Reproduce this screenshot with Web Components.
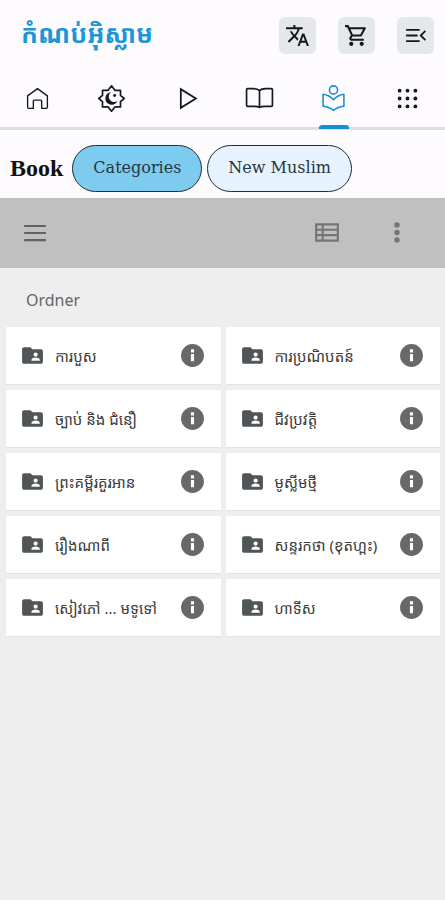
<!DOCTYPE html>
<html lang="km">
<head>
<meta charset="utf-8">
<meta name="viewport" content="width=device-width, initial-scale=1">
<title>កំណប់អ៊ិស្លាម</title>
<style>
  body {
    margin: 0;
    background: #eeeeee;
    font-family: "Noto Sans", "Noto Sans Khmer", sans-serif;
  }
</style>
</head>
<body>
<app-page></app-page>

<script>
const ICONS = {
  translate: '<path fill="currentColor" d="M12.87 15.07l-2.54-2.51.03-.03c1.74-1.94 2.98-4.17 3.71-6.53H17V4h-7V2H8v2H1v1.99h11.17C11.5 7.92 10.44 9.75 9 11.35 8.07 10.32 7.3 9.19 6.69 8h-2c.73 1.63 1.73 3.17 2.98 4.56l-5.09 5.02L4 19l5-5 3.11 3.11.76-2.04zM18.5 10h-2L12 22h2l1.12-3h4.75L21 22h2l-4.5-12zm-2.62 7l1.62-4.33L19.12 17h-3.24z"/>',
  cart: '<path fill="currentColor" d="M15.55 13c.75 0 1.41-.41 1.75-1.03l3.58-6.49A.996.996 0 0 0 20.01 4H5.21l-.94-2H1v2h2l3.6 7.59-1.35 2.44C4.52 15.37 5.48 17 7 17h12v-2H7l1.1-2h7.45zM6.16 6h12.15l-2.76 5H8.53L6.16 6zM7 18c-1.1 0-1.99.9-1.99 2S5.9 22 7 22s2-.9 2-2-.9-2-2-2zm10 0c-1.1 0-1.99.9-1.99 2s.89 2 1.99 2 2-.9 2-2-.9-2-2-2z"/>',
  menuOpen: '<path fill="none" stroke="currentColor" stroke-width="1.7" d="M3 6.5h13M3 12h11M3 17.5h13M21.5 7.5L17 12l4.5 4.5"/>',
  home: '<path fill="none" stroke="currentColor" stroke-width="1.3" stroke-linejoin="round" d="M2.500 9.500L12 2.500l9.500 7V20.500q0 1-1 1h-4.500v-7q0-1-1-1h-6q-1 0-1 1v7H3.500q-1 0-1-1z"/>',
  star: '<path fill="none" stroke="currentColor" stroke-width="1.5" stroke-linejoin="round" d="M12 .7l3 4H20V9.300L23.300 12 20 14.700V19.500H15l-3 3.800-3-3.800H4V14.700L.7 12 4 9.300V4.700H9z"/><path fill="currentColor" d="M11.500 6.500a5.500 5.500 0 1 0 5.600 7.700 4.500 4.500 0 1 1-5.600-7.700z"/><circle cx="14.800" cy="9.300" r="1.300" fill="currentColor"/>',
  play: '<path fill="none" stroke="currentColor" stroke-width="1.7" d="M7.500 3v18L22 12z"/>',
  book: '<path fill="none" stroke="currentColor" stroke-width="1.5" stroke-linejoin="round" d="M12 5C10.500 3.500 9 3.300 6.500 3.300H1.500Q.5 3.300.5 4.300V18Q.5 19 1.500 19h5.500c2.500 0 4 0 5 1 1-1 2.500-1 5-1h5.500q1 0 1-1V4.300q0-1-1-1H17.500C15 3.300 13.500 3.500 12 5zM12 5v15"/>',
  reader: '<circle cx="12" cy="3.800" r="3.900" fill="none" stroke="currentColor" stroke-width="1.5"/><path fill="none" stroke="currentColor" stroke-width="1.5" stroke-linejoin="round" d="M2 8C6 8.500 9.500 10.500 12 13.300c2.500-2.800 6-4.800 10-5.300V19.500c-4 .5-7.500 1.700-10 3.900-2.500-2.200-6-3.400-10-3.900z"/>',
  apps: '<g fill="currentColor"><circle cx="3" cy="3" r="2.200"/><circle cx="12" cy="3" r="2.200"/><circle cx="21" cy="3" r="2.200"/><circle cx="3" cy="12" r="2.200"/><circle cx="12" cy="12" r="2.200"/><circle cx="21" cy="12" r="2.200"/><circle cx="3" cy="21" r="2.200"/><circle cx="12" cy="21" r="2.200"/><circle cx="21" cy="21" r="2.200"/></g>',
  menu: '<path fill="none" stroke="currentColor" stroke-width="2" d="M2 5.5h20M2 12h20M2 18.5h20"/>',
  list: '<path fill="none" stroke="currentColor" stroke-width="2" d="M2 4h20v15H2zM2 9h20M2 14h20M8 4v15"/>',
  more: '<g fill="currentColor"><circle cx="12" cy="4.500" r="2.500"/><circle cx="12" cy="11.500" r="2.500"/><circle cx="12" cy="18.500" r="2.500"/></g>',
  folder: '<path fill="currentColor" d="M20 6h-8l-2-2H4c-1.1 0-1.99.9-1.99 2L2 18c0 1.1.9 2 2 2h16c1.1 0 2-.9 2-2V8c0-1.1-.9-2-2-2zm-5 3c1.1 0 2 .9 2 2s-.9 2-2 2-2-.9-2-2 .9-2 2-2zm4 8h-8v-1c0-1.33 2.67-2 4-2s4 .67 4 2v1z"/>',
  info: '<path fill="currentColor" d="M12 1a11 11 0 1 0 0 22 11 11 0 0 0 0-22zm1.500 16.500h-3v-7h3zm0-8.500h-3V6h3z"/>'
};

class UiIcon extends HTMLElement {
  constructor() {
    super();
    this.attachShadow({ mode: 'open' });
  }

  connectedCallback() {
    this.shadowRoot.innerHTML = `
      <style>
        :host { display: block; flex: none; width: var(--icon-size, 24px); height: var(--icon-size, 24px); }
        svg { display: block; width: 100%; height: 100%; overflow: visible; }
      </style>
      <svg viewBox="0 0 24 24" aria-hidden="true">${ICONS[this.getAttribute('name')]}</svg>
    `;
  }
}

class AppHeader extends HTMLElement {
  constructor() {
    super();
    this.attachShadow({ mode: 'open' });
    this.shadowRoot.innerHTML = `
      <style>
        :host { display: block; background: #fefbff; }
        header { display: flex; align-items: center; height: 70px; padding: 0 11px 0 21px; box-sizing: border-box; }
        h1 { flex: 1; margin: 0 0 4px; color: #1c96d6; font-size: 25px; line-height: 40px; font-weight: 700; white-space: nowrap; }
        .actions { display: flex; gap: 22px; }
        button {
          display: grid; place-items: center; width: 37px; height: 37px; padding: 0;
          border: 0; border-radius: 6px; background: #e5e8eb; color: #15171a; --icon-size: 25px;
        }
      </style>
      <header>
        <h1><slot></slot></h1>
        <div class="actions">
          <button type="button" aria-label="Language"><ui-icon name="translate"></ui-icon></button>
          <button type="button" aria-label="Cart"><ui-icon name="cart"></ui-icon></button>
          <button type="button" aria-label="Menu"><ui-icon name="menuOpen"></ui-icon></button>
        </div>
      </header>
    `;
  }
}

class TabBar extends HTMLElement {
  constructor() {
    super();
    this.attachShadow({ mode: 'open' });
    this.shadowRoot.innerHTML = `
      <style>
        :host { display: block; background: #fefbff; }
        nav { display: grid; grid-template-columns: repeat(6, 1fr); height: 60px; box-sizing: border-box; border-bottom: 3px solid #dddcdf; }
        a { position: relative; display: grid; place-items: center; color: #17181c; --icon-size: 25px; }
        a.big { --icon-size: 27px; }
        a.active { color: #168ed0; }
        a.active::after {
          content: ""; position: absolute; bottom: -2px; left: calc(50% - 15px);
          width: 30px; height: 4px; border-radius: 3px 3px 0 0; background: #168ed0;
        }
        a.small { --icon-size: 21px; }
      </style>
      <nav>
        <a href="#home" aria-label="Home"><ui-icon name="home"></ui-icon></a>
        <a href="#prayer" class="big" aria-label="Prayer"><ui-icon name="star"></ui-icon></a>
        <a href="#videos" aria-label="Videos"><ui-icon name="play"></ui-icon></a>
        <a href="#quran" class="big" aria-label="Quran"><ui-icon name="book"></ui-icon></a>
        <a href="#books" class="active" aria-label="Books" aria-current="page"><ui-icon name="reader"></ui-icon></a>
        <a href="#more" class="small" aria-label="More"><ui-icon name="apps"></ui-icon></a>
      </nav>
    `;
  }
}

class FilterChip extends HTMLElement {
  constructor() {
    super();
    this.attachShadow({ mode: 'open' });
    this.shadowRoot.innerHTML = `
      <style>
        :host { display: block; }
        button {
          display: block; height: 47px; padding: 0 20px; border: 1px solid #202b32; border-radius: 24px;
          background: #e6f2fd; color: #263743; white-space: nowrap;
          font-family: "DejaVu Serif", serif; font-size: 16px; line-height: 24px;
        }
        :host([selected]) button { background: #7ecbf0; }
      </style>
      <button type="button"><slot></slot></button>
    `;
  }
}

class FilterBar extends HTMLElement {
  constructor() {
    super();
    this.attachShadow({ mode: 'open' });
    this.shadowRoot.innerHTML = `
      <style>
        :host {
          display: flex; align-items: center; gap: 5px; height: 68px; box-sizing: border-box;
          padding: 8px 10px 0; background: #fefbff;
        }
        h2 { margin: 0 4px 0 0; color: #111; font-family: "Liberation Serif", serif; font-size: 24px; line-height: 32px; }
      </style>
      <h2>Book</h2>
      <slot></slot>
    `;
  }
}

class ListToolbar extends HTMLElement {
  constructor() {
    super();
    this.attachShadow({ mode: 'open' });
    this.shadowRoot.innerHTML = `
      <style>
        :host { display: flex; align-items: center; gap: 44px; height: 70px; box-sizing: border-box; padding: 0 35px 0 22px; background: #c0c0c0; }
        button { padding: 0; border: 0; background: none; color: #757575; --icon-size: 26px; }
        button.menu { margin-right: auto; color: #626262; }
      </style>
      <button type="button" class="menu" aria-label="Open menu"><ui-icon name="menu"></ui-icon></button>
      <button type="button" aria-label="List view"><ui-icon name="list"></ui-icon></button>
      <button type="button" aria-label="More options"><ui-icon name="more"></ui-icon></button>
    `;
  }
}

class FolderCard extends HTMLElement {
  constructor() {
    super();
    this.attachShadow({ mode: 'open' });
    this.shadowRoot.innerHTML = `
      <style>
        :host {
          display: flex; align-items: center; min-width: 0; height: 57px; box-sizing: border-box;
          padding: 0 16px 0 14px; background: #fff; box-shadow: 0 1px 1px #e3e3e3;
        }
        a {
          display: flex; flex: 1; align-items: center; gap: 10px; min-width: 0;
          color: #3b3b3b; font-size: 15px; line-height: 28px; text-decoration: none; white-space: nowrap;
        }
        a ui-icon { color: #505558; --icon-size: 25px; }
        button { padding: 0; border: 0; background: none; color: #686868; --icon-size: 25px; }
      </style>
      <a href="#folder"><ui-icon name="folder"></ui-icon><slot></slot></a>
      <button type="button" aria-label="Info"><ui-icon name="info"></ui-icon></button>
    `;
  }
}

class FolderList extends HTMLElement {
  constructor() {
    super();
    this.attachShadow({ mode: 'open' });
    this.shadowRoot.innerHTML = `
      <style>
        :host { display: block; padding: 20px 5px 20px 6px; background: #eee; }
        h3 { margin: 0 20px 15px; color: #666; font-size: 16px; line-height: 24px; font-weight: 400; }
        .grid { display: grid; grid-template-columns: repeat(2, minmax(0, 1fr)); gap: 6px 5px; }
      </style>
      <h3>Ordner</h3>
      <div class="grid"><slot></slot></div>
    `;
  }
}

class AppPage extends HTMLElement {
  constructor() {
    super();
    this.attachShadow({ mode: 'open' });
    this.shadowRoot.innerHTML = `
      <style>
        :host { display: block; }
      </style>
      <app-header>កំណប់អ៊ិស្លាម</app-header>
      <tab-bar></tab-bar>
      <filter-bar>
        <filter-chip selected>Categories</filter-chip>
        <filter-chip>New Muslim</filter-chip>
      </filter-bar>
      <list-toolbar></list-toolbar>
      <folder-list>
        <folder-card>ការបួស</folder-card>
        <folder-card>ការប្រណិបតន៍</folder-card>
        <folder-card>ច្បាប់ និង ជំនឿ</folder-card>
        <folder-card>ជីវប្រវត្តិ</folder-card>
        <folder-card>ព្រះគម្ពីរគួរអាន</folder-card>
        <folder-card>មូស្លីមថ្មី</folder-card>
        <folder-card>រឿងណាពី</folder-card>
        <folder-card>សន្ទរកថា (ខុតហ្ពះ)</folder-card>
        <folder-card>សៀវភៅ ... មទូទៅ</folder-card>
        <folder-card>ហាទីស</folder-card>
      </folder-list>
    `;
  }
}

customElements.define('ui-icon', UiIcon);
customElements.define('app-header', AppHeader);
customElements.define('tab-bar', TabBar);
customElements.define('filter-chip', FilterChip);
customElements.define('filter-bar', FilterBar);
customElements.define('list-toolbar', ListToolbar);
customElements.define('folder-card', FolderCard);
customElements.define('folder-list', FolderList);
customElements.define('app-page', AppPage);
</script>
</body>
</html>
